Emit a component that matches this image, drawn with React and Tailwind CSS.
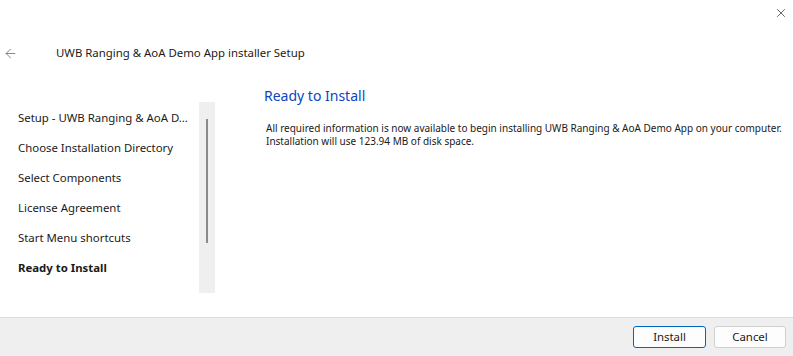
import { ArrowLeft, X } from 'lucide-react';

const steps = [
  'Setup - UWB Ranging & AoA D...',
  'Choose Installation Directory',
  'Select Components',
  'License Agreement',
  'Start Menu shortcuts',
  'Ready to Install',
];

export default function App() {
  return (
    <div
      className="relative flex h-[356px] w-[793px] flex-col overflow-hidden bg-white text-[#1a1a1a]"
      style={{ fontFamily: '"Noto Sans", "Open Sans", sans-serif' }}
    >
      {/* window close */}
      <button className="absolute right-[4px] top-[5px] flex h-[16px] w-[16px] items-center justify-center text-[#222]">
        <X size={14} strokeWidth={1.2} />
      </button>

      <div className="flex h-[317px] flex-col">
        {/* title row */}
        <div className="mt-[42px] flex h-[22px] items-center">
          <ArrowLeft size={15} strokeWidth={1.4} className="ml-[3px] text-[#777]" />
          <span className="ml-[38px] whitespace-nowrap text-[11.4px]">UWB Ranging &amp; AoA Demo App installer Setup</span>
        </div>

        <div className="flex flex-1">
          {/* steps sidebar */}
          <div className="mt-[38px] flex h-[191px] w-[215px] shrink-0">
            <ul className="w-[199px] pl-[18px] pt-[1px]">
              {steps.map((s, i) => (
                <li
                  key={s}
                  className={`flex h-[30px] items-center whitespace-nowrap text-[11.4px] ${i === steps.length - 1 ? 'font-bold' : ''}`}
                >
                  {s}
                </li>
              ))}
            </ul>
            <div className="flex w-[16px] justify-center bg-[#efefef] pt-[17px]">
              <div className="h-[124px] w-[2px] bg-[#8a8a8a]" />
            </div>
          </div>

          {/* page content */}
          <div className="ml-[49px] pt-[22px]">
            <h1 className="text-[14px] leading-[20px] text-[#0b46c0]">Ready to Install</h1>
            <div className="ml-[2px] mt-[16px] whitespace-nowrap text-[10px] leading-[13px]">
              <p>
                All required information is now available to begin installing UWB Ranging &amp; AoA Demo App on your computer.
              </p>
              <p>Installation will use 123.94 MB of disk space.</p>
            </div>
          </div>
        </div>
      </div>

      {/* footer */}
      <div className="flex flex-1 items-center justify-end gap-[8px] border-t border-[#dcdcdc] bg-[#efefef] pr-[7px]">
        <button className="h-[22px] w-[73px] rounded-[3px] border border-[#0067c0] bg-[#fdfdfd] text-[11.4px]">
          Install
        </button>
        <button className="h-[22px] w-[72px] rounded-[3px] border border-[#d0d0d0] bg-[#fdfdfd] text-[11.4px]">
          Cancel
        </button>
      </div>
    </div>
  );
}
